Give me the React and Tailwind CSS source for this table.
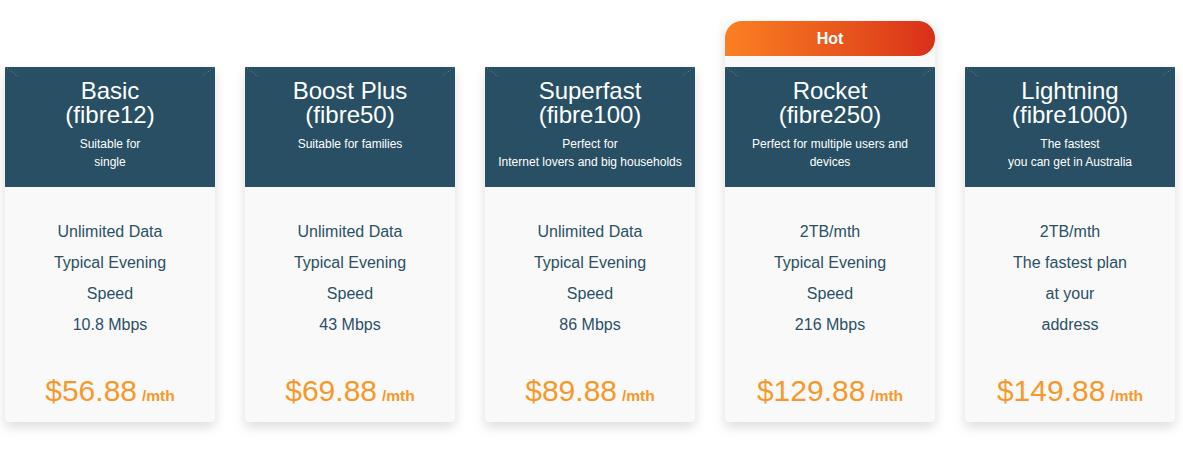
import React from 'react';

const plans = [
  {
    name: 'Basic',
    code: '(fibre12)',
    blurb: ['Suitable for', 'single'],
    features: ['Unlimited Data', 'Typical Evening', 'Speed', '10.8 Mbps'],
    price: '$56.88',
  },
  {
    name: 'Boost Plus',
    code: '(fibre50)',
    blurb: ['Suitable for families'],
    features: ['Unlimited Data', 'Typical Evening', 'Speed', '43 Mbps'],
    price: '$69.88',
  },
  {
    name: 'Superfast',
    code: '(fibre100)',
    blurb: ['Perfect for', 'Internet lovers and big households'],
    features: ['Unlimited Data', 'Typical Evening', 'Speed', '86 Mbps'],
    price: '$89.88',
  },
  {
    name: 'Rocket',
    code: '(fibre250)',
    blurb: ['Perfect for multiple users and', 'devices'],
    features: ['2TB/mth', 'Typical Evening', 'Speed', '216 Mbps'],
    price: '$129.88',
    hot: true,
  },
  {
    name: 'Lightning',
    code: '(fibre1000)',
    blurb: ['The fastest', 'you can get in Australia'],
    features: ['2TB/mth', 'The fastest plan', 'at your', 'address'],
    price: '$149.88',
  },
];

// the little dotted fold marks in the header corners
function CornerMark({ flip }) {
  return (
    <svg
      width="14"
      height="10"
      viewBox="0 0 14 10"
      className={`absolute top-0 ${flip ? 'right-0 -scale-x-100' : 'left-0'}`}
    >
      <line x1="0" y1="0" x2="13" y2="9" stroke="rgba(255,255,255,0.28)" strokeWidth="1" strokeDasharray="1 1.5" />
      <line x1="4" y1="0" x2="13" y2="6" stroke="rgba(255,255,255,0.15)" strokeWidth="1" strokeDasharray="1 2" />
    </svg>
  );
}

function PlanCard({ plan }) {
  return (
    <div className="w-[210px] bg-[#f9f9f9] rounded-[4px] shadow-[0_5px_12px_rgba(0,0,0,0.14)] flex flex-col">
      {plan.hot && (
        <div className="h-[46px] pb-[11px]">
          <div className="h-[35px] rounded-tl-[17px] rounded-r-[17px] bg-gradient-to-r from-[#fa7f22] to-[#d92e19] flex items-center justify-center text-white font-bold text-[16px]">
            Hot
          </div>
        </div>
      )}
      <div className="relative h-[120px] bg-[#284f63] text-white text-center pt-[12px]">
        <CornerMark />
        <CornerMark flip />
        <div className="text-[24px] leading-[24px] font-light">{plan.name}</div>
        <div className="text-[24px] leading-[24px] font-light">{plan.code}</div>
        <div className="mt-[8px] text-[12px] leading-[18px]">
          {plan.blurb.map((line, i) => (
            <div key={i}>{line}</div>
          ))}
        </div>
      </div>
      <div className="h-[235px] flex flex-col text-center">
        <div className="pt-[29px] text-[16px] leading-[31px] text-[#2b5065]">
          {plan.features.map((f, i) => (
            <div key={i}>{f}</div>
          ))}
        </div>
        <div className="mt-auto pb-[8px] flex items-baseline justify-center gap-[5px] text-[#f7982a] leading-[36px]">
          <span className="text-[30px]">{plan.price}</span>
          <span className="text-[15.5px] font-bold">/mth</span>
        </div>
      </div>
    </div>
  );
}

export default function App() {
  return (
    <div className="h-[452px] w-[1183px] bg-white font-['Liberation_Sans',Arial,sans-serif] flex items-end gap-[30px] pl-[5px] pb-[30px]">
      {plans.map((plan) => (
        <PlanCard key={plan.name} plan={plan} />
      ))}
    </div>
  );
}
